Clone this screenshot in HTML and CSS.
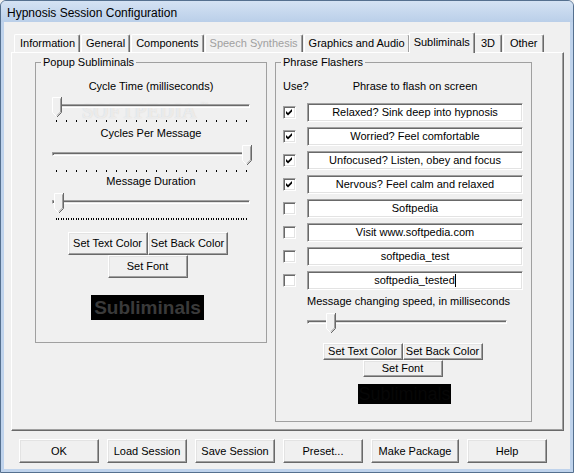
FILE: index.html
```html
<!DOCTYPE html>
<html>
<head>
<meta charset="utf-8">
<title>Hypnosis Session Configuration</title>
<link rel="stylesheet" href="styles.css">
</head>
<body>
<div class="window">
  <div class="titlebar">Hypnosis Session Configuration</div>
  <div class="client">
    <div class="tabs">
      <div class="tabrow">
        <div class="tab tab-info">Information</div>
        <div class="tab">General</div>
        <div class="tab">Components</div>
        <div class="tab disabled">Speech Synthesis</div>
        <div class="tab">Graphics and Audio</div>
        <div class="tab selected">Subliminals</div>
        <div class="tab tab-short">3D</div>
        <div class="tab tab-short">Other</div>
      </div>
      <div class="panel">
        <fieldset class="group group-left">
          <legend>Popup Subliminals</legend>
          <div class="wm">SOFTPEDIA<span class="tm">™</span></div>
          <div class="caption cap-first">Cycle Time (milliseconds)</div>
          <div class="slider slider-left s1">
            <div class="track"></div>
            <svg class="thumb" style="left:0px" width="10" height="21" viewBox="0 0 10 21"><path d="M0.5 0.5H9.5V15.5L5 20L0.5 15.5Z" fill="#f0f0f0"/><path d="M0.5 15.5V0.5H9" fill="none" stroke="#fff"/><path d="M0.5 15.5L4.5 19.5" fill="none" stroke="#fff"/><path d="M9.5 0V15.5L5 20" fill="none" stroke="#696969"/><path d="M8.5 1.5V15L5 18.5" fill="none" stroke="#a0a0a0"/></svg>
          </div>
          <div class="ticks t1"></div>
          <div class="caption cap-2">Cycles Per Message</div>
          <div class="slider slider-left s2">
            <div class="track"></div>
            <svg class="thumb" style="left:190px" width="10" height="21" viewBox="0 0 10 21"><path d="M0.5 0.5H9.5V15.5L5 20L0.5 15.5Z" fill="#f0f0f0"/><path d="M0.5 15.5V0.5H9" fill="none" stroke="#fff"/><path d="M0.5 15.5L4.5 19.5" fill="none" stroke="#fff"/><path d="M9.5 0V15.5L5 20" fill="none" stroke="#696969"/><path d="M8.5 1.5V15L5 18.5" fill="none" stroke="#a0a0a0"/></svg>
          </div>
          <div class="ticks t2"></div>
          <div class="caption cap-3">Message Duration</div>
          <div class="slider slider-left s3">
            <div class="track"></div>
            <svg class="thumb" style="left:2px" width="10" height="21" viewBox="0 0 10 21"><path d="M0.5 0.5H9.5V15.5L5 20L0.5 15.5Z" fill="#f0f0f0"/><path d="M0.5 15.5V0.5H9" fill="none" stroke="#fff"/><path d="M0.5 15.5L4.5 19.5" fill="none" stroke="#fff"/><path d="M9.5 0V15.5L5 20" fill="none" stroke="#696969"/><path d="M8.5 1.5V15L5 18.5" fill="none" stroke="#a0a0a0"/></svg>
          </div>
          <div class="ticks dense"></div>
          <div class="btngroup btngroup-left">
            <button class="btn">Set Text Color</button><button class="btn">Set Back Color</button>
            <button class="btn">Set Font</button>
          </div>
          <div class="preview preview-left">Subliminals</div>
        </fieldset>
        <fieldset class="group group-right">
          <legend>Phrase Flashers</legend>
          <div class="phrases phrases-head">
            <span class="use">Use?</span>
            <span class="phrase-head">Phrase to flash on screen</span>
          </div>
          <div class="phrases phrase-rows">
            <span class="cb checked"><svg width="11" height="11" viewBox="0 0 11 11"><path d="M2 4L4 6L8 2V4.5L4 8.5L2 6.5Z" fill="#000"/></svg></span><div class="tb">Relaxed? Sink deep into hypnosis</div>
            <span class="cb checked"><svg width="11" height="11" viewBox="0 0 11 11"><path d="M2 4L4 6L8 2V4.5L4 8.5L2 6.5Z" fill="#000"/></svg></span><div class="tb">Worried? Feel comfortable</div>
            <span class="cb checked"><svg width="11" height="11" viewBox="0 0 11 11"><path d="M2 4L4 6L8 2V4.5L4 8.5L2 6.5Z" fill="#000"/></svg></span><div class="tb">Unfocused? Listen, obey and focus</div>
            <span class="cb checked"><svg width="11" height="11" viewBox="0 0 11 11"><path d="M2 4L4 6L8 2V4.5L4 8.5L2 6.5Z" fill="#000"/></svg></span><div class="tb">Nervous? Feel calm and relaxed</div>
            <span class="cb"></span><div class="tb">Softpedia</div>
            <span class="cb"></span><div class="tb">Visit www.softpedia.com</div>
            <span class="cb"></span><div class="tb">softpedia_test</div>
            <span class="cb"></span><div class="tb">softpedia_tested<span class="caret"></span></div>
          </div>
          <div class="speed">
            <div class="caption speed-caption">Message changing speed, in milliseconds</div>
            <div class="slider slider-right">
              <div class="track"></div>
              <svg class="thumb" style="left:19px" width="10" height="21" viewBox="0 0 10 21"><path d="M0.5 0.5H9.5V15.5L5 20L0.5 15.5Z" fill="#f0f0f0"/><path d="M0.5 15.5V0.5H9" fill="none" stroke="#fff"/><path d="M0.5 15.5L4.5 19.5" fill="none" stroke="#fff"/><path d="M9.5 0V15.5L5 20" fill="none" stroke="#696969"/><path d="M8.5 1.5V15L5 18.5" fill="none" stroke="#a0a0a0"/></svg>
            </div>
          </div>
          <div class="btngroup btngroup-right">
            <button class="btn small">Set Text Color</button><button class="btn small">Set Back Color</button>
            <button class="btn small">Set Font</button>
          </div>
          <div class="preview preview-right">Subliminals</div>
        </fieldset>
      </div>
    </div>
    <div class="bottombar">
      <button class="btn big">OK</button>
      <button class="btn big">Load Session</button>
      <button class="btn big">Save Session</button>
      <button class="btn big">Preset...</button>
      <button class="btn big pkg">Make Package</button>
      <button class="btn big">Help</button>
    </div>
  </div>
</div>
</body>
</html>
```

FILE: styles.css
```css
html, body {
  margin: 0;
  padding: 0;
  background: #f0f0f0;
}
body {
  font-family: "Liberation Sans", Arial, sans-serif;
  font-size: 11px;
  color: #000;
}
.window {
  width: 574px;
  height: 473px;
  box-sizing: border-box;
  border: 1px solid #55708f;
  border-radius: 6px 6px 0 0;
  background: #bfd3ec;
  display: flex;
  flex-direction: column;
  overflow: hidden;
}
.titlebar {
  height: 21px;
  flex: none;
  box-sizing: border-box;
  padding: 4px 0 0 6px;
  font-size: 12px;
  line-height: 16px;
  background: linear-gradient(#d4e2f3, #bacfe9);
  white-space: nowrap;
}
.client {
  flex: 1;
  margin: 0 3px 3px;
  background: #f0f0f0;
}
.tabs {
  margin: 10px 0 0 7px;
  width: 553px;
}
.tabrow {
  display: flex;
  align-items: flex-end;
  height: 20px;
  padding-left: 3px;
}
.tab {
  height: 18px;
  box-sizing: border-box;
  padding: 0 4px;
  border-top: 1px solid #fff;
  border-left: 1px solid #fff;
  border-right: 1px solid #696969;
  box-shadow: inset -1px 0 #a0a0a0;
  border-radius: 2px 2px 0 0;
  line-height: 17px;
  white-space: nowrap;
  margin-right: 1px;
}
.tab.tab-info {
  padding: 0 4px 0 5px;
}
.tab.tab-short {
  padding: 0 6px 0 6px;
}
.tab.disabled {
  color: #a0a0a0;
}
.tab.selected {
  height: 21px;
  margin: 0 -1px -1px -2px;
  padding: 1px 4px 0;
  position: relative;
  z-index: 1;
  background: #f0f0f0;
}
.panel {
  height: 379px;
  box-sizing: border-box;
  border: 1px solid;
  border-color: #fff #696969 #696969 #fff;
  box-shadow: inset -1px -1px #a0a0a0;
  padding: 3px 0 0 23px;
  display: flex;
  gap: 8px;
  align-items: flex-start;
}
.group {
  margin: 0;
  padding: 0;
  border: 1px solid #a0a0a0;
  box-sizing: border-box;
  min-width: 0;
  position: relative;
}
.group legend {
  margin-left: 5px;
  padding: 0 2px;
  line-height: 13px;
}
.group-left {
  width: 232px;
  height: 287px;
}
.group-right {
  width: 257px;
  height: 366px;
}
.caption {
  text-align: center;
  line-height: 13px;
  white-space: nowrap;
}
.cap-first { margin-top: 11px; }
.cap-2 { margin-top: 5px; }
.cap-3 { margin-top: 3px; }
.slider {
  position: relative;
  height: 22px;
}
.slider-left {
  width: 198px;
  margin-left: 16px;
}
.s1 { margin-top: 4px; }
.s2 { margin-top: 5px; }
.s3 { margin-top: 5px; }
.track {
  position: relative;
  top: 7px;
  height: 4px;
  box-sizing: border-box;
  border: 1px solid;
  border-color: #a0a0a0 #fff #fff #a0a0a0;
  box-shadow: inset 1px 1px #696969;
  background: #e3e3e3;
}
.thumb {
  position: absolute;
  top: 0;
  display: block;
}
.ticks {
  margin-left: 20px;
  width: 191px;
  height: 2px;
  background: repeating-linear-gradient(90deg, #000 0 1px, transparent 1px 10px);
}
.t1 { margin-top: 1px; }
.t2 { margin-top: 3px; }
.ticks.dense {
  margin-top: 3px;
  background: repeating-linear-gradient(90deg, #000 0 1px, transparent 1px 2.5px);
}
.btn {
  display: block;
  box-sizing: border-box;
  width: 80px;
  height: 23px;
  padding: 0;
  margin: 0;
  border: 1px solid;
  border-color: #fff #696969 #696969 #fff;
  box-shadow: inset -1px -1px #a0a0a0, inset 1px 1px #e3e3e3;
  background: #f0f0f0;
  font-family: "Liberation Sans", Arial, sans-serif;
  font-size: 11px;
  line-height: 21px;
  color: #000;
  text-align: center;
  white-space: nowrap;
}
.btn.small {
  height: 17px;
  line-height: 15px;
}
.btn.big {
  height: 24px;
  line-height: 22px;
}
.btn.pkg {
  width: 88px;
}
.btngroup {
  display: flex;
  flex-wrap: wrap;
  justify-content: center;
  width: 161px;
}
.btngroup-left {
  margin: 12px 0 0 31px;
}
.btngroup-right {
  margin: 8px 0 0 46px;
}
.preview {
  background: #000;
  text-align: center;
  white-space: nowrap;
  overflow: hidden;
}
.preview-left {
  margin: 17px 0 0 55px;
  width: 113px;
  height: 25px;
  line-height: 25px;
  font-size: 19px;
  font-weight: bold;
  color: #3a3a3a;
}
.preview-right {
  margin: 7px 0 0 82px;
  width: 93px;
  height: 20px;
  line-height: 20px;
  font-size: 18px;
  color: #070707;
}
.phrases {
  display: grid;
  grid-template-columns: 13px 216px;
  column-gap: 11px;
  margin-left: 7px;
  align-items: center;
}
.phrases-head {
  margin-top: 11px;
  line-height: 13px;
}
.use {
  white-space: nowrap;
}
.phrase-head {
  text-align: center;
  white-space: nowrap;
}
.phrase-rows {
  margin-top: 10px;
  row-gap: 5px;
}
.cb {
  display: block;
  width: 13px;
  height: 13px;
  box-sizing: border-box;
  border: 1px solid;
  border-color: #a0a0a0 #fff #fff #a0a0a0;
  box-shadow: inset 1px 1px #696969, inset -1px -1px #e3e3e3;
  background: #fff;
}
.cb svg {
  display: block;
}
.tb {
  height: 19px;
  box-sizing: border-box;
  border: 1px solid;
  border-color: #a0a0a0 #fff #fff #a0a0a0;
  box-shadow: inset 1px 1px #696969, inset -1px -1px #e3e3e3;
  background: #fff;
  text-align: center;
  line-height: 17px;
  white-space: nowrap;
  overflow: hidden;
}
.caret {
  display: inline-block;
  width: 1px;
  height: 13px;
  background: #000;
  vertical-align: -3px;
}
.speed {
  margin-left: 31px;
  width: 200px;
}
.speed-caption {
  margin-top: 5px;
}
.slider-right {
  margin-top: 5px;
  width: 200px;
}
.wm {
  position: absolute;
  left: 46px;
  top: 29px;
  font-family: "Liberation Serif", serif;
  font-weight: bold;
  font-size: 20px;
  line-height: 16px;
  height: 16px;
  color: rgba(255, 255, 255, 0.6);
  text-shadow: 0 0 1px rgba(160, 160, 160, 0.45);
  pointer-events: none;
  white-space: nowrap;
}
.wm .tm {
  font-size: 8px;
  vertical-align: 10px;
  margin-left: 4px;
}
.bottombar {
  display: flex;
  gap: 8px;
  margin: 8px 0 0 15px;
}
```
